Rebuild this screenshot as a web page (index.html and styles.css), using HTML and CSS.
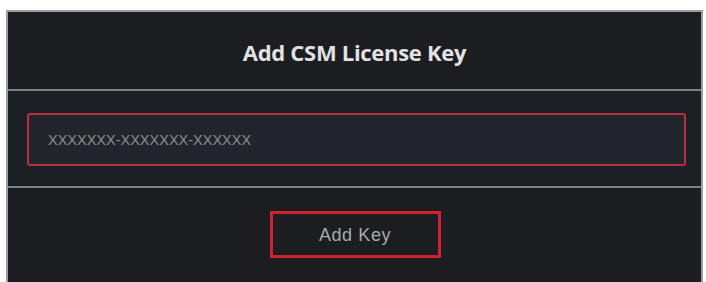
FILE: index.html
```html
<!DOCTYPE html>
<html>
<head>
<meta charset="utf-8">
<link rel="stylesheet" href="styles.css">
</head>
<body>
<div class="panel">
  <div class="header">
    <h1 class="title">Add CSM License Key</h1>
  </div>
  <div class="body">
    <div class="input-box"><span class="placeholder">XXXXXXX-XXXXXXX-XXXXXX</span></div>
  </div>
  <div class="footer">
    <div class="button">Add Key</div>
  </div>
</div>
</body>
</html>
```
FILE: styles.css
```css
html, body {
  margin: 0;
  padding: 0;
  background: #ffffff;
  height: 282px;
  overflow: hidden;
}
.panel {
  margin: 10px 3px 0 6px;
  border: 2px solid #9c9ea1;
  border-bottom: none;
  background: #1b1d21;
  height: 280px;
  font-family: "Open Sans", "Noto Sans", sans-serif;
}
.header {
  height: 77px;
  display: flex;
  align-items: center;
  justify-content: center;
  border-bottom: 2px solid #7d8084;
}
.title {
  margin: 0;
  font-size: 22px;
  font-weight: 700;
  color: #e2e2e4;
  letter-spacing: -0.3px;
  transform: translateY(1px);
}
.body {
  height: 97px;
  padding: 22px 15px 0 19px;
  box-sizing: border-box;
  border-bottom: 2px solid #7d8084;
  background: #1c1f24;
}
.input-box {
  height: 53px;
  box-sizing: border-box;
  border: 2px solid #b8303f;
  border-radius: 3px;
  background: #22252c;
  display: flex;
  align-items: center;
  padding-left: 19px;
}
.placeholder {
  font-family: "Liberation Sans", Arial, sans-serif;
  font-size: 14.5px;
  color: #8c8d90;
  letter-spacing: 0px;
}
.footer {
  display: flex;
  justify-content: center;
  padding-top: 23px;
}
.button {
  width: 171px;
  height: 47px;
  box-sizing: border-box;
  border: 3px solid #d0222f;
  display: flex;
  align-items: center;
  justify-content: center;
  font-family: "Liberation Sans", Arial, sans-serif;
  font-size: 18px;
  color: #a9aaad;
  letter-spacing: 0.6px;
  margin-left: 1px;
  padding-top: 2px;
}
```
